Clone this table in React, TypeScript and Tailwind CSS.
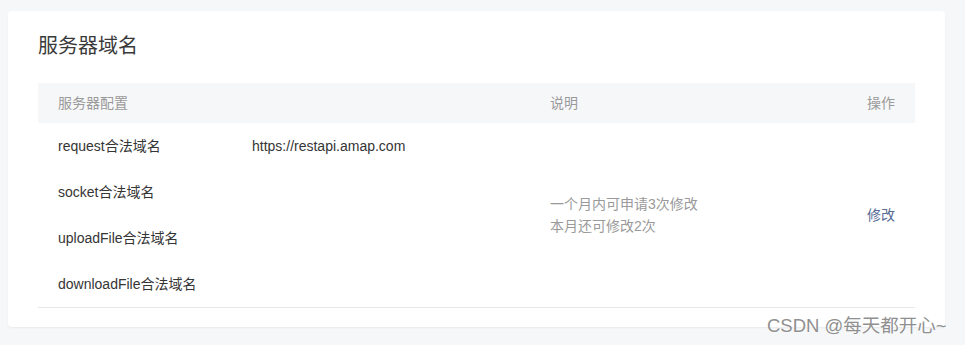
const rows = [
  { name: 'request合法域名', value: 'https://restapi.amap.com' },
  { name: 'socket合法域名', value: '' },
  { name: 'uploadFile合法域名', value: '' },
  { name: 'downloadFile合法域名', value: '' },
];

export default function App() {
  return (
    <div
      className="relative h-[345px] w-[965px] overflow-hidden bg-[#f6f7f9] pl-2 pt-[11px]"
      style={{ fontFamily: '"Liberation Sans", "Noto Sans CJK SC", sans-serif' }}
    >
      <div className="h-[316px] w-[937px] rounded-[4px] bg-white px-[30px] shadow-[0_1px_2px_rgba(0,0,0,0.06)]">
        <h2 className="flex h-[72px] items-center pb-[3px] text-[20px] font-normal leading-none text-[#3a3a3a]">
          服务器域名
        </h2>

        {/* 表头 */}
        <div className="grid h-10 grid-cols-[492px_1fr_auto] items-center bg-[#f6f7f9] px-5 text-[14px] text-[#9a9a9a]">
          <span>服务器配置</span>
          <span>说明</span>
          <span>操作</span>
        </div>

        {/* 表体 */}
        <div className="grid grid-cols-[194px_298px_1fr_auto] grid-rows-[repeat(4,46px)] border-b border-[#e7e7e7] px-5 text-[14px] text-[#353535]">
          {rows.map((r, i) => (
            <div key={r.name} className="contents">
              <div className="flex items-center" style={{ gridRow: i + 1, gridColumn: 1 }}>
                {r.name}
              </div>
              <div className="flex items-center" style={{ gridRow: i + 1, gridColumn: 2 }}>
                {r.value}
              </div>
            </div>
          ))}
          <div className="col-start-3 row-span-4 row-start-1 self-center leading-[22px] text-[#9a9a9a]">
            <p>一个月内可申请3次修改</p>
            <p>本月还可修改2次</p>
          </div>
          <div className="col-start-4 row-span-4 row-start-1 self-center">
            <a className="cursor-pointer text-[#576b95]">修改</a>
          </div>
        </div>
      </div>

      {/* 水印 */}
      <div className="absolute left-[767px] top-[314px] text-[18.5px] leading-6 text-[#909090] [text-shadow:0_0_2px_#fff,0_0_2px_#fff]">
        CSDN @每天都开心~
      </div>
    </div>
  );
}
